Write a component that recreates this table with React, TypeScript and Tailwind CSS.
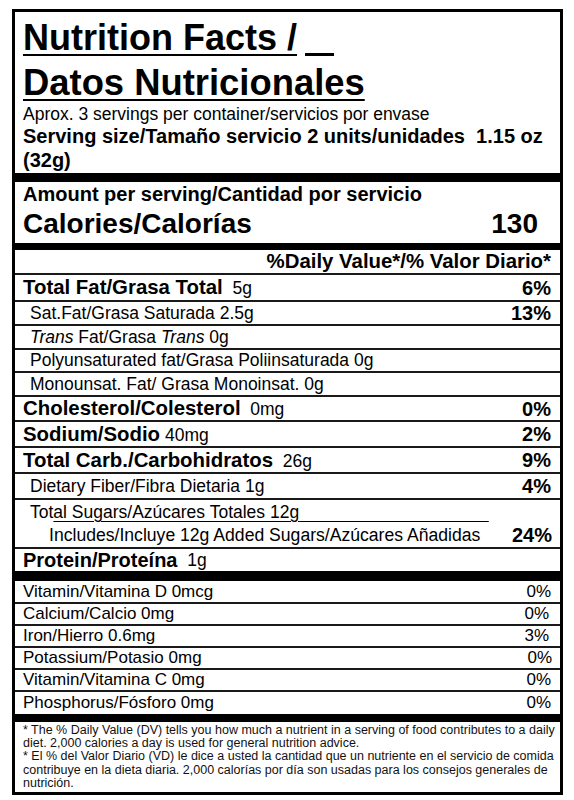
import React from "react";

type RowProps = {
  children: React.ReactNode;
  right?: React.ReactNode;
  cls: string;
};

function Row({ children, right, cls }: RowProps) {
  return (
    <div className={"flex items-center justify-between border-b-2 border-[#1a1a1a] " + cls}>
      <div className="whitespace-nowrap">{children}</div>
      {right !== undefined ? <div className="whitespace-nowrap">{right}</div> : null}
    </div>
  );
}

export default function App() {
  return (
    <div
      className="w-[574px] h-[800px] bg-white pt-[9px] pl-[12px] text-black"
      style={{ fontFamily: '"Liberation Sans", Arial, sans-serif' }}
    >
      <div className="w-[551px] border-[3px] border-black">
        {/* Header */}
        <div className="pl-[8px] pr-[8px] pt-[3px] pb-[1px]">
          <div className="text-[36px] font-bold leading-[45px] whitespace-nowrap">
            <span className="underline decoration-[2px] underline-offset-[4px]">Nutrition Facts /</span>
            <span className="inline-block ml-[8px] w-[29px] h-[3px] bg-black align-[-6px]" />
          </div>
          <div className="text-[36.4px] font-bold leading-[45px] whitespace-nowrap">
            <span className="underline decoration-[2px] underline-offset-[4px]">Datos Nutricionales</span>
          </div>
          <div className="text-[17.5px] leading-[19px] whitespace-nowrap">
            Aprox. 3 servings per container/servicios por envase
          </div>
          <div className="text-[20px] font-bold leading-[24px] whitespace-nowrap">
            Serving size/Tamaño servicio 2 units/unidades&nbsp; 1.15 oz
            <br />
            (32g)
          </div>
        </div>
        <div className="h-[9px] bg-black" />

        {/* Calories */}
        <div className="pl-[8px] pr-[22px]">
          <div className="text-[20px] font-bold leading-[24px] whitespace-nowrap">
            Amount per serving/Cantidad por servicio
          </div>
          <div className="flex items-center justify-between h-[35px] text-[28px] font-bold">
            <span>Calories/Calorías</span>
            <span>130</span>
          </div>
        </div>
        <div className="h-[2px] bg-white" />
        <div className="h-[7px] bg-black" />

        <div className="h-[25px] flex items-center justify-end pr-[9px] border-b-2 border-[#1a1a1a] text-[20.4px] font-bold whitespace-nowrap">
          %Daily Value*/% Valor Diario*
        </div>

        {/* Nutrients */}
        <Row cls="h-[27px] pl-[8px] pr-[9px]" right={<span className="text-[20px] font-bold">6%</span>}>
          <span className="text-[20.4px] font-bold">Total Fat/Grasa Total</span>
          <span className="text-[17.5px]">&nbsp; 5g</span>
        </Row>
        <Row cls="h-[24px] pl-[15px] pr-[9px]" right={<span className="text-[20px] font-bold">13%</span>}>
          <span className="text-[17.5px]">Sat.Fat/Grasa Saturada 2.5g</span>
        </Row>
        <Row cls="h-[24px] pl-[15px] pr-[9px]">
          <span className="text-[17.5px]">
            <i>Trans</i> Fat/Grasa <i>Trans</i> 0g
          </span>
        </Row>
        <Row cls="h-[23px] pl-[15px] pr-[9px]">
          <span className="text-[17.5px]">Polyunsaturated fat/Grasa Poliinsaturada 0g</span>
        </Row>
        <Row cls="h-[24px] pl-[15px] pr-[9px]">
          <span className="text-[17.5px]">Monounsat. Fat/ Grasa Monoinsat. 0g</span>
        </Row>
        <Row cls="h-[25px] pl-[8px] pr-[9px]" right={<span className="text-[20px] font-bold">0%</span>}>
          <span className="text-[20.4px] font-bold">Cholesterol/Colesterol</span>
          <span className="text-[17.5px]">&nbsp; 0mg</span>
        </Row>
        <Row cls="h-[26px] pl-[8px] pr-[9px]" right={<span className="text-[20px] font-bold">2%</span>}>
          <span className="text-[20.4px] font-bold">Sodium/Sodio</span>
          <span className="text-[17.5px]"> 40mg</span>
        </Row>
        <Row cls="h-[26px] pl-[8px] pr-[9px]" right={<span className="text-[20px] font-bold">9%</span>}>
          <span className="text-[20.4px] font-bold">Total Carb./Carbohidratos</span>
          <span className="text-[17.5px]">&nbsp; 26g</span>
        </Row>
        <Row cls="h-[26px] pl-[15px] pr-[9px]" right={<span className="text-[20px] font-bold">4%</span>}>
          <span className="text-[17.5px]">Dietary Fiber/Fibra Dietaria 1g</span>
        </Row>
        <div className="h-[49px] border-b-2 border-[#1a1a1a] pl-[15px] pr-[8px] flex flex-col justify-center">
          <div className="text-[17.5px] leading-[22px] whitespace-nowrap">
            Tot
            <span className="underline decoration-1 underline-offset-[3px]">
              al Sugars/Azúcares Totales 12g
              {"\u00a0".repeat(39)}
            </span>
          </div>
          <div className="flex items-center justify-between pl-[19px] leading-[24px] whitespace-nowrap">
            <span className="text-[17.6px]">Includes/Incluye 12g Added Sugars/Azúcares Añadidas</span>
            <span className="text-[20px] font-bold">24%</span>
          </div>
        </div>
        <div className="h-[22px] flex items-center pl-[8px] whitespace-nowrap">
          <span className="text-[20px] font-bold">Protein/Proteína</span>
          <span className="text-[17.5px]">&nbsp; 1g</span>
        </div>
        <div className="h-[10px] bg-black" />

        {/* Vitamins */}
        <Row cls="h-[23px] pl-[8px] pr-[9px] text-[17px]" right="0%">
          Vitamin/Vitamina D 0mcg
        </Row>
        <Row cls="h-[22px] pl-[8px] pr-[11px] text-[17px]" right="0%">
          Calcium/Calcio 0mg
        </Row>
        <Row cls="h-[22px] pl-[8px] pr-[11px] text-[17px]" right="3%">
          Iron/Hierro 0.6mg
        </Row>
        <Row cls="h-[22px] pl-[8px] pr-[8px] text-[17px]" right="0%">
          Potassium/Potasio 0mg
        </Row>
        <Row cls="h-[22px] pl-[8px] pr-[9px] text-[17px]" right="0%">
          Vitamin/Vitamina C 0mg
        </Row>
        <div className="h-[22px] flex items-center justify-between pl-[8px] pr-[9px] text-[17px] whitespace-nowrap">
          <span>Phosphorus/Fósforo 0mg</span>
          <span>0%</span>
        </div>
        <div className="h-[8px] bg-black" />

        {/* Footnote */}
        <div className="pl-[8px] pr-[4px] pt-[2px] pb-[2px] text-[12.5px] leading-[13.2px] text-[#111]">
          <div className="whitespace-nowrap">
            * The % Daily Value (DV) tells you how much a nutrient in a serving of food contributes to a daily
          </div>
          <div className="whitespace-nowrap">diet. 2,000 calories a day is used for general nutrition advice.</div>
          <div className="whitespace-nowrap">
            * El % del Valor Diario (VD) le dice a usted la cantidad que un nutriente en el servicio de comida
          </div>
          <div className="whitespace-nowrap">
            contribuye en la dieta diaria. 2,000 calorías por día son usadas para los consejos generales de
          </div>
          <div className="whitespace-nowrap">nutrición.</div>
        </div>
      </div>
    </div>
  );
}
